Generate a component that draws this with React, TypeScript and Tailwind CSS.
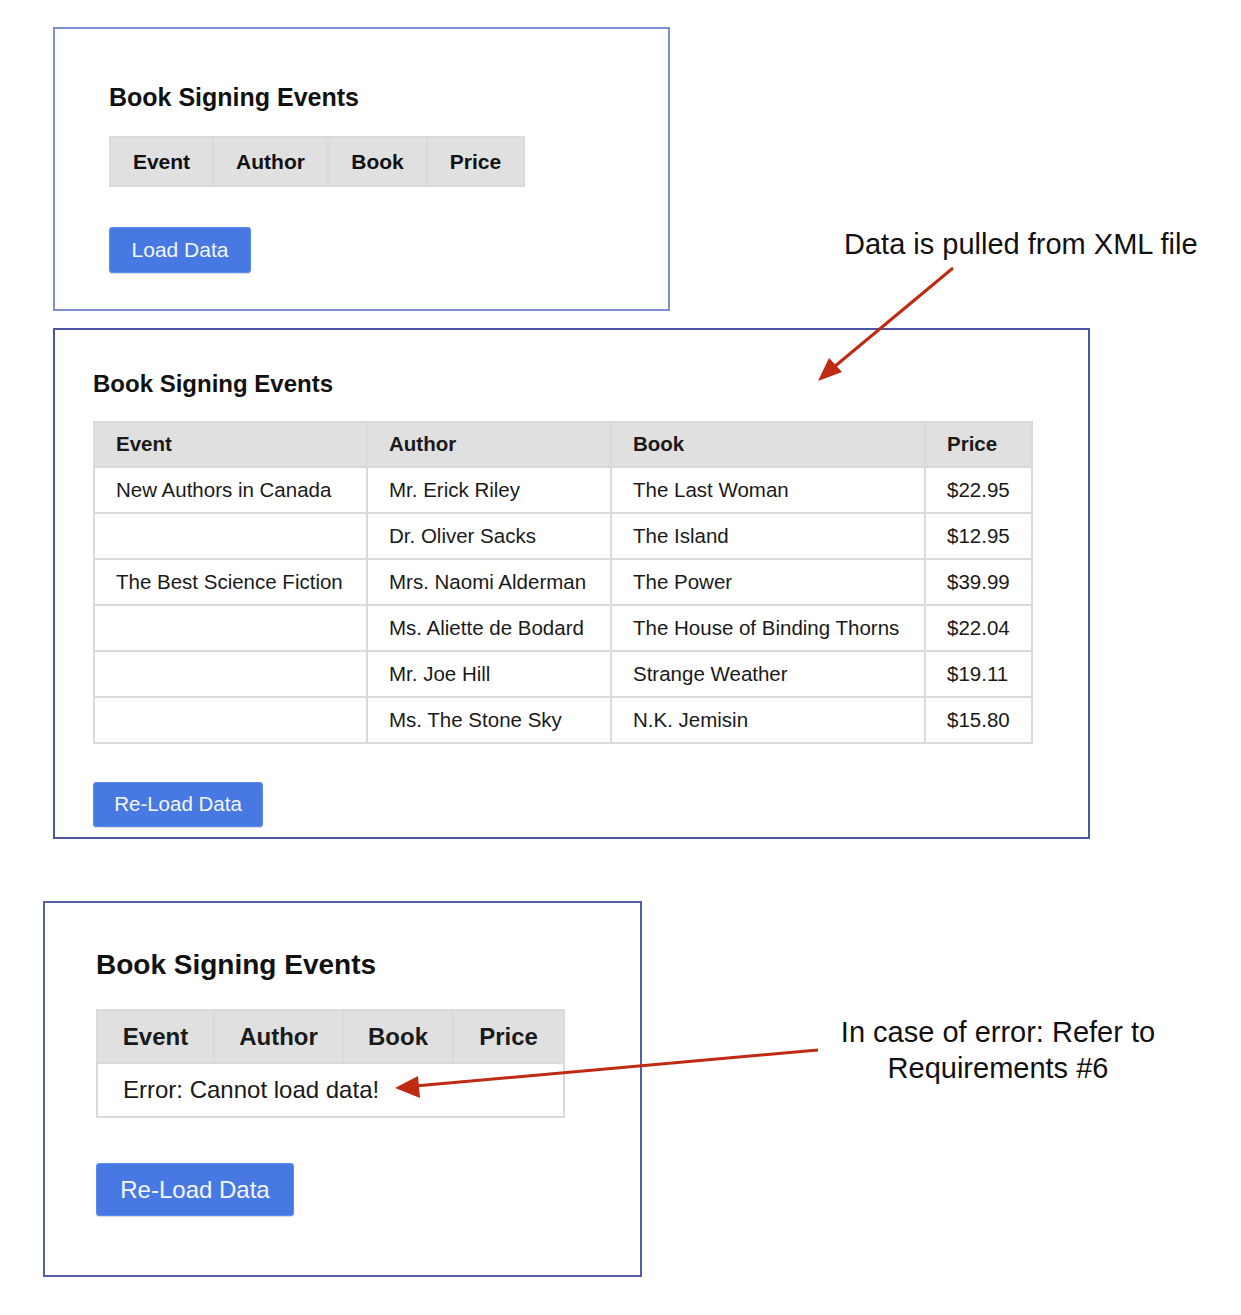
import React from "react";

type Row = { event: string; author: string; book: string; price: string };

const rows: Row[] = [
  { event: "New Authors in Canada", author: "Mr. Erick Riley", book: "The Last Woman", price: "$22.95" },
  { event: "", author: "Dr. Oliver Sacks", book: "The Island", price: "$12.95" },
  { event: "The Best Science Fiction", author: "Mrs. Naomi Alderman", book: "The Power", price: "$39.99" },
  { event: "", author: "Ms. Aliette de Bodard", book: "The House of Binding Thorns", price: "$22.04" },
  { event: "", author: "Mr. Joe Hill", book: "Strange Weather", price: "$19.11" },
  { event: "", author: "Ms. The Stone Sky", book: "N.K. Jemisin", price: "$15.80" },
];

const headers = ["Event", "Author", "Book", "Price"];

const cell = "border-2 border-[#dadada]";

const Button = ({ label, className }: { label: string; className: string }) => (
  <button
    className={`bg-[#4879e3] border border-[#5b8cf0] rounded-[3px] text-[#f4f7ff] flex items-center justify-center shadow-[0_1px_1px_rgba(0,0,0,0.15)] ${className}`}
  >
    {label}
  </button>
);

const EmptyPanel = () => (
  <div className="w-[617px] h-[284px] border-2 border-[#7c8fd6] pt-[53px] pl-[54px] shrink-0">
    <h2 className="text-[25px] leading-[30px] font-bold text-[#111]">Book Signing Events</h2>
    <table className="mt-[24px] border-collapse table-fixed w-[414px] text-[21px] font-bold text-[#111]">
      <colgroup>
        <col className="w-[103px]" />
        <col className="w-[115px]" />
        <col className="w-[99px]" />
        <col className="w-[97px]" />
      </colgroup>
      <thead>
        <tr className="h-[49px] bg-[#e0e0e0]">
          {headers.map((h) => (
            <th key={h} className={`${cell} text-center font-bold`}>
              {h}
            </th>
          ))}
        </tr>
      </thead>
    </table>
    <Button label="Load Data" className="mt-[40px] w-[142px] h-[46px] text-[21px]" />
  </div>
);

const DataPanel = () => (
  <div className="w-[1037px] h-[511px] border-2 border-[#4b57a3] pt-[39px] pl-[38px]">
    <h2 className="text-[24px] leading-[29px] font-bold text-[#111]">Book Signing Events</h2>
    <table className="mt-[23px] border-collapse table-fixed w-[938px] text-[20.5px] text-[#1a1a1a]">
      <colgroup>
        <col className="w-[273px]" />
        <col className="w-[244px]" />
        <col className="w-[314px]" />
        <col className="w-[107px]" />
      </colgroup>
      <thead>
        <tr className="h-[45px] bg-[#e0e0e0]">
          {headers.map((h) => (
            <th key={h} className={`${cell} text-left font-bold pl-[21px]`}>
              {h}
            </th>
          ))}
        </tr>
      </thead>
      <tbody>
        {rows.map((r, i) => (
          <tr key={i} className="h-[46px]">
            <td className={`${cell} pl-[21px] whitespace-nowrap`}>{r.event}</td>
            <td className={`${cell} pl-[21px] whitespace-nowrap`}>{r.author}</td>
            <td className={`${cell} pl-[21px] whitespace-nowrap`}>{r.book}</td>
            <td className={`${cell} pl-[21px] whitespace-nowrap`}>{r.price}</td>
          </tr>
        ))}
      </tbody>
    </table>
    <Button label="Re-Load Data" className="mt-[38px] w-[170px] h-[45px] text-[20.5px]" />
  </div>
);

const ErrorPanel = () => (
  <div className="w-[599px] h-[376px] border-2 border-[#5560a8] pt-[45px] pl-[51px] shrink-0">
    <h2 className="text-[28px] leading-[34px] font-bold text-[#111]">Book Signing Events</h2>
    <table className="mt-[27px] border-collapse table-fixed w-[467px] text-[24px] text-[#1a1a1a]">
      <colgroup>
        <col className="w-[117px]" />
        <col className="w-[129px]" />
        <col className="w-[110px]" />
        <col className="w-[111px]" />
      </colgroup>
      <thead>
        <tr className="h-[53px] bg-[#e0e0e0]">
          {headers.map((h) => (
            <th key={h} className={`${cell} text-center font-bold`}>
              {h}
            </th>
          ))}
        </tr>
      </thead>
      <tbody>
        <tr className="h-[54px]">
          <td colSpan={4} className={`${cell} pl-[25px]`}>
            Error: Cannot load data!
          </td>
        </tr>
      </tbody>
    </table>
    <Button label="Re-Load Data" className="mt-[45px] w-[198px] h-[53px] text-[24px]" />
  </div>
);

const Arrows = () => (
  <svg className="absolute inset-0 pointer-events-none" width="1241" height="1315" viewBox="0 0 1241 1315">
    <g stroke="#bf2a13" strokeWidth="3" fill="#bf2a13">
      <line x1="953" y1="268" x2="834" y2="367" />
      <polygon points="818,381 829,358 842,372" stroke="none" />
      <line x1="818" y1="1050" x2="415" y2="1086" />
      <polygon points="395,1088 418,1076 420,1098" stroke="none" />
    </g>
  </svg>
);

export default function App() {
  return (
    <div className="relative w-[1241px] h-[1315px] bg-white font-['Liberation_Sans',Arial,sans-serif]">
      <div className="flex flex-col">
        <div className="flex items-start mt-[27px] ml-[53px]">
          <EmptyPanel />
          <p className="ml-[174px] mt-[200px] text-[29px] leading-[35px] text-[#111] whitespace-nowrap">
            Data is pulled from XML file
          </p>
        </div>
        <div className="mt-[17px] ml-[53px]">
          <DataPanel />
        </div>
        <div className="flex items-start mt-[62px] ml-[43px]">
          <ErrorPanel />
          <p className="ml-[186px] mt-[113px] w-[340px] text-center text-[29px] leading-[36px] text-[#111]">
            In case of error: Refer to
            <br />
            Requirements #6
          </p>
        </div>
      </div>
      <Arrows />
    </div>
  );
}
